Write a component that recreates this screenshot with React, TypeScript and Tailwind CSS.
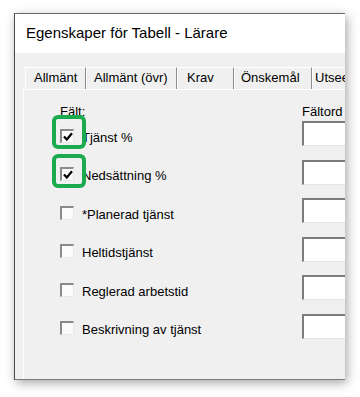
import React from "react";

const font = { fontFamily: '"Liberation Sans", Arial, sans-serif' };

const rows = [
  { label: "Tjänst %", checked: true },
  { label: "Nedsättning %", checked: true },
  { label: "*Planerad tjänst", checked: false },
  { label: "Heltidstjänst", checked: false },
  { label: "Reglerad arbetstid", checked: false },
  { label: "Beskrivning av tjänst", checked: false },
];

const tabs = [
  { label: "Allmänt", cls: "w-[61px] pl-[8px]" },
  { label: "Allmänt (övr)", cls: "w-[91px] pl-[7px]" },
  { label: "Krav", cls: "w-[57px] pl-[9px]" },
  { label: "Önskemål", cls: "w-[78px] pl-[6px]" },
  { label: "Utseende", cls: "w-[70px] pl-[2px]" },
];

function CheckBox({ checked }: { checked: boolean }) {
  return (
    <div className="relative w-[14px] h-[14px] shrink-0 border-t-2 border-l-2 border-[#8a8a8a] border-r border-b border-r-[#e8e8e8] border-b-[#e8e8e8] bg-[#fbfbfb] flex items-center justify-center">
      {checked && (
        <svg width="10" height="9" viewBox="0 0 10 9">
          <path d="M1 4.5 L3.8 7.5 L9 1.2" stroke="#000" strokeWidth="2.2" fill="none" />
        </svg>
      )}
    </div>
  );
}

export default function App() {
  return (
    <div className="w-[360px] h-[397px] bg-white overflow-hidden pl-[14px] pt-[13px]" style={font}>
      <div className="w-[331px] h-[367px] bg-[#f0f0f0] border-l border-t border-b border-l-[#4a4a4a] border-t-[#6a6a6a] border-b-[#7a7a7a] shadow-[2px_3px_10px_rgba(0,0,0,0.35)] flex flex-col overflow-hidden">
        <div className="h-[39px] shrink-0 bg-white flex items-center pl-[11px] text-[15px] text-black">
          Egenskaper för Tabell - Lärare
        </div>
        <div className="flex-1 flex flex-col pl-[8px] pt-[14px]">
          <div className="flex h-[22px] shrink-0 pl-[2px]">
            {tabs.map((t, i) => (
              <div
                key={i}
                className={`${t.cls} shrink-0 h-full flex items-center whitespace-nowrap overflow-hidden text-[13px] text-black border-t border-l border-r border-t-white border-l-white border-r-[#8c8c8c] pb-[1px]`}
              >
                {t.label}
              </div>
            ))}
          </div>
          <div className="flex-1 w-[400px] border-t border-l border-white relative">
            <div className="pl-[36px] pt-[13px] flex flex-col">
              <div className="flex h-[18px] items-center text-[13px] text-black">
                <span className="w-[242px]">Fält:</span>
                <span>Fältord</span>
              </div>
              {rows.map((r, i) => (
                <div key={i} className="flex items-start h-[38.5px]">
                  <div className="relative w-[242px] flex items-center h-[25px] mt-[2px]">
                    <CheckBox checked={r.checked} />
                    {r.checked && (
                      <div className="absolute left-[-8px] top-[-8px] w-[34px] h-[34px] rounded-[6px] border-[4px] border-[#1caa4f]" />
                    )}
                    <span className="ml-[8px] mt-[4px] text-[13px] text-black whitespace-nowrap">{r.label}</span>
                  </div>
                  <div className="w-[60px] h-[25px] border-t-2 border-l-2 border-[#7c7c7c] border-b border-b-[#e4e4e4] bg-white" />
                </div>
              ))}
            </div>
          </div>
        </div>
      </div>
    </div>
  );
}
